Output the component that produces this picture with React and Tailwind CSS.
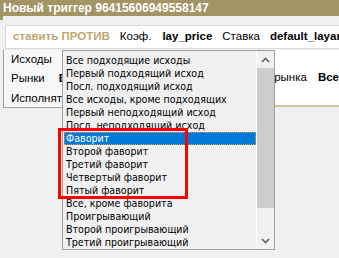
import React from "react";

const items = [
  "Все подходящие исходы",
  "Первый подходящий исход",
  "Посл. подходящий исход",
  "Все исходы, кроме подходящих",
  "Первый неподходящий исход",
  "Посл. неподходящий исход",
  "Фаворит",
  "Второй фаворит",
  "Третий фаворит",
  "Четвертый фаворит",
  "Пятый фаворит",
  "Все, кроме фаворита",
  "Проигрывающий",
  "Второй проигрывающий",
  "Третий проигрывающий",
];

export default function App() {
  return (
    <div
      className="relative w-[339px] h-[258px] overflow-hidden bg-[#f0f0f0] text-[11px] text-black"
      style={{ fontFamily: '"Liberation Sans", Arial, sans-serif' }}
    >
      <div className="h-[16px] bg-[#a39465] text-white font-bold text-[12px] leading-[16px] pl-[3px] whitespace-nowrap">
        Новый триггер 96415606949558147
      </div>
      <div className="flex">
        <div className="w-[3px] h-[4px] bg-[#a39465]" />
      </div>
      <div className="ml-[5px] mt-[5px] h-[24px] bg-white border border-[#d9d9d9] border-r-0 flex items-center pl-[7px] whitespace-nowrap">
        <span className="font-bold text-[#c2a56e] text-[11.5px]">ставить ПРОТИВ</span>
        <span className="ml-[10px] text-[11.5px]">Коэф.</span>
        <span className="ml-[11px] font-bold text-[11.5px]">lay_price</span>
        <span className="ml-[10px] text-[11.5px]">Ставка</span>
        <span className="ml-[10px] font-bold text-[11.5px]">default_layamount</span>
      </div>
      <div className="flex h-[58px] mt-[1px]">
        <div className="ml-[3px] w-[272px] border-l border-b border-[#a0a0a0] bg-[#f7f7f7] flex flex-col pl-[7px] whitespace-nowrap text-[11.5px]">
          <div className="h-[19px] leading-[19px]">Исходы</div>
          <div className="h-[19px] leading-[19px] flex">
            <span>Рынки</span>
            <span className="ml-[14px] font-bold">В</span>
          </div>
          <div className="h-[19px] leading-[19px] mt-[1px]">Исполнять</div>
        </div>
        <div className="flex-1 flex flex-col">
          <div className="h-[55px] bg-white flex items-center pl-[1px] whitespace-nowrap text-[11.5px]">
            <span>рынка</span>
            <span className="ml-[11px] font-bold">Все</span>
          </div>
          <div className="h-[2px] bg-[#d2c69e]" />
        </div>
      </div>

      {/* Dropdown list overlay */}
      <div
        className="absolute left-[62px] top-[50px] w-[213px] h-[200px] bg-[#f0f0f0] border border-[#a0a0a0] flex text-[10.6px]"
        style={{ fontFamily: '"DejaVu Sans Condensed", "Liberation Sans", sans-serif' }}
      >
        <div className="flex-1 pt-[3px] pl-[1px]">
          {items.map((t) => (
            <div
              key={t}
              className={
                "h-[13px] leading-[13px] pl-[2px] whitespace-nowrap " +
                (t === "Фаворит"
                  ? "bg-[#0078d7] text-white outline-1 outline-dotted outline-[#e8a040] -outline-offset-1"
                  : "")
              }
            >
              {t}
            </div>
          ))}
        </div>
        <div className="w-[1px] bg-white" />
        <div className="w-[17px] flex flex-col items-center bg-[#f0f0f0]">
          <div className="h-[17px] w-full flex items-center justify-center">
            <svg width="9" height="6" viewBox="0 0 9 6">
              <path d="M1 5 L4.5 1.5 L8 5" fill="none" stroke="#606060" strokeWidth="1.6" />
            </svg>
          </div>
          <div className="w-full h-[140px] bg-[#cdcdcd]" />
          <div className="flex-1" />
          <div className="h-[17px] w-full flex items-center justify-center">
            <svg width="9" height="6" viewBox="0 0 9 6">
              <path d="M1 1 L4.5 4.5 L8 1" fill="none" stroke="#606060" strokeWidth="1.6" />
            </svg>
          </div>
        </div>
      </div>

      {/* Red highlight rectangle */}
      <div className="absolute left-[58px] top-[128px] w-[130px] h-[71px] border-[3px] border-[#ff0000]" />
    </div>
  );
}
